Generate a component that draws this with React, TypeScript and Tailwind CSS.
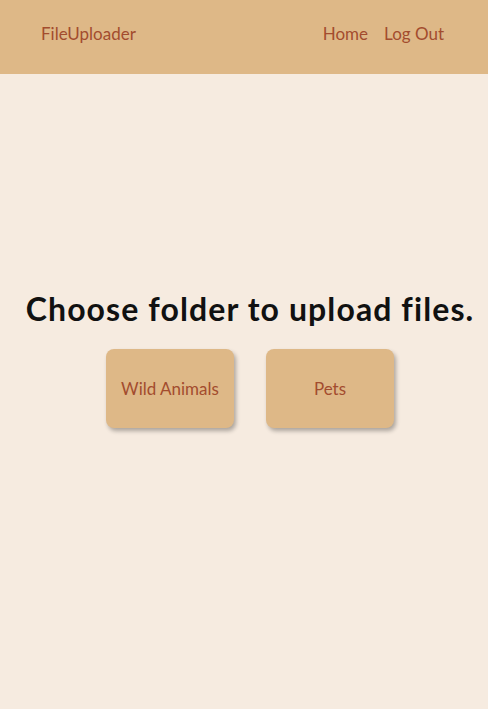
export default function App() {
  return (
    <div className="min-h-[709px] bg-[#f6ebe0]" style={{ fontFamily: "Lato, 'Open Sans', sans-serif" }}>
      <header className="h-[74px] bg-[#deb887] flex items-start justify-between pt-[25px] pl-[41px] pr-[44px] text-[17px] leading-[17px] text-[#a34c2e]">
        <a>FileUploader</a>
        <nav className="flex gap-[16px]">
          <a>Home</a>
          <a>Log Out</a>
        </nav>
      </header>
      <main className="flex flex-col items-center pt-[216px] pl-[12px]">
        <h1 className="text-[32px] leading-[38px] font-bold tracking-[1.1px] text-[#111] whitespace-nowrap">Choose folder to upload files.</h1>
        <div className="mt-[21px] flex gap-[32px]">
          <button className="w-[128px] h-[79px] rounded-[8px] bg-[#deb887] text-[#a34c2e] text-[17px] shadow-[2px_3px_4px_rgba(0,0,0,0.3)]">Wild Animals</button>
          <button className="w-[128px] h-[79px] rounded-[8px] bg-[#deb887] text-[#a34c2e] text-[17px] shadow-[2px_3px_4px_rgba(0,0,0,0.3)]">Pets</button>
        </div>
      </main>
    </div>
  );
}
